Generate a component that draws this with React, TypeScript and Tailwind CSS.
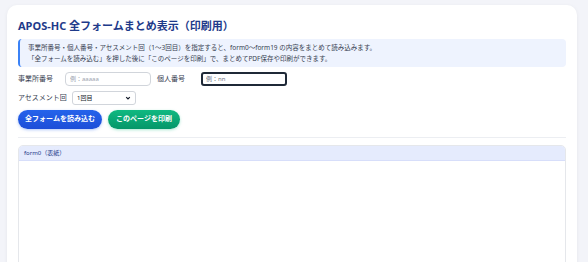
export default function App() {
  return (
    <div
      className="min-h-screen bg-[#f3f4f9] pt-[5px] pl-[7px] pr-[11px]"
      style={{ fontFamily: '"Noto Sans", "Noto Sans CJK JP", sans-serif' }}
    >
      <div className="rounded-[10px] bg-white px-[11px] pt-[13px] pb-4 shadow-[0_1px_4px_rgba(15,23,42,0.06)]">
        <h1 className="text-[11px] font-bold leading-[16px] text-[#1e3a8a]">
          APOS-HC 全フォームまとめ表示（印刷用）
        </h1>

        <div className="mt-[5px] rounded-[4px] border-l-2 border-[#3b82f6] bg-[#eef3fe] px-[8px] py-[3px] text-[6.5px] leading-[11px] text-[#374151]">
          <p>事業所番号・個人番号・アセスメント回（1〜3回目）を指定すると、form0〜form19 の内容をまとめて読み込みます。</p>
          <p>「全フォームを読み込む」を押した後に「このページを印刷」で、まとめてPDF保存や印刷ができます。</p>
        </div>

        <div className="mt-[5px] flex items-center text-[7px] text-[#374151]">
          <span className="w-[47px]">事業所番号</span>
          <input
            className="h-[14px] w-[86px] rounded-[4px] border border-[#d1d5db] px-[4px] text-[6px] outline-none placeholder:text-[#9ca3af]"
            placeholder="例：aaaaa"
          />
          <span className="ml-[6px] w-[44px]">個人番号</span>
          <input
            className="h-[14px] w-[86px] rounded-[3px] border-2 border-[#1f2937] px-[3px] text-[6px] outline-none placeholder:text-[#6b7280]"
            placeholder="例：nn"
          />
        </div>

        <div className="mt-[5px] flex items-center text-[7px] text-[#374151]">
          <span className="w-[54px]">アセスメント回</span>
          <div className="relative flex h-[14px] w-[64px] items-center rounded-[3px] border border-[#d1d5db] bg-white px-[4px] text-[6px] text-[#111827]">
            1回目
            <svg className="absolute right-[4px] h-[6px] w-[6px]" viewBox="0 0 10 10" fill="none" stroke="#111827" strokeWidth="2">
              <path d="M2 3.5 5 6.5 8 3.5" />
            </svg>
          </div>
        </div>

        <div className="mt-[5px] flex gap-[6px]">
          <button className="h-[19px] w-[84px] rounded-full bg-gradient-to-b from-[#2563eb] to-[#1d4ed8] text-[7px] font-bold text-white shadow-[0_1px_3px_rgba(37,99,235,0.35)]">
            全フォームを読み込む
          </button>
          <button className="h-[19px] w-[72px] rounded-full bg-gradient-to-b from-[#10b981] to-[#059669] text-[7px] font-bold text-white shadow-[0_1px_3px_rgba(16,185,129,0.35)]">
            このページを印刷
          </button>
        </div>

        <div className="mt-[8px] border-t border-[#eceef2]" />

        <div className="mt-[7px] h-[140px] overflow-hidden rounded-t-[5px] border border-[#e5e7eb]">
          <div className="flex h-[15px] items-center border-b border-[#d7defa] bg-[#e5ebfd] px-[5px] text-[6px] text-[#1e3a8a]">
            form0（表紙）
          </div>
        </div>
      </div>
    </div>
  );
}
